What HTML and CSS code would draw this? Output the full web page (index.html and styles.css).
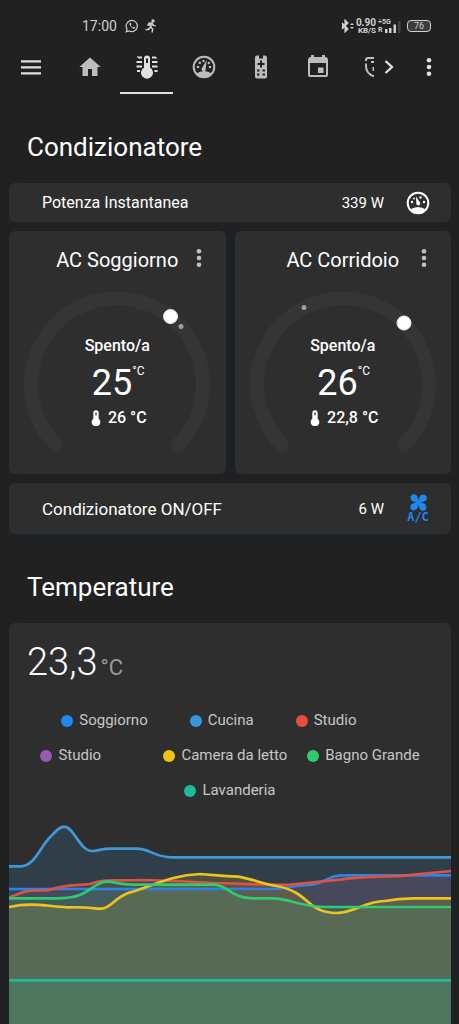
FILE: index.html
```html
<!DOCTYPE html>
<html lang="it">
<head>
<meta charset="utf-8">
<meta name="viewport" content="width=device-width, initial-scale=1">
<title>Condizionatore</title>
<link rel="stylesheet" href="styles.css">
</head>
<body>
<svg class="defs" aria-hidden="true">
  <symbol id="thermo" viewBox="0 0 24 24"><path fill-rule="evenodd" d="M16 13V4.500a4 4 0 0 0-8 0V13a6.500 6.500 0 1 0 8 0ZM12 3.500a1 1 0 0 1 1 1V8h-2V4.500a1 1 0 0 1 1-1Z"/></symbol>
  <symbol id="dots" viewBox="0 0 24 24"><circle cx="12" cy="5.300" r="2.300"/><circle cx="12" cy="12" r="2.300"/><circle cx="12" cy="18.700" r="2.300"/></symbol>
</svg>
<div class="app">
  <div class="status">
    <span class="clock">17:00</span>
    <svg class="s-icon" viewBox="0 0 14 14"><path d="M1.200 12.800 2 10A5.600 5.600 0 1 1 4.200 12Z" fill="none" stroke="currentColor" stroke-width="1.200"/><path d="M4.600 4c-.8 1.500 2.200 5.600 4.400 5.700 1 0 1.500-.8 1.300-1.200L8.800 7.700l-.8.8C7 8.200 6 7 5.800 6.200l.6-.8-.6-1.600Z" fill="currentColor"/></svg>
    <svg class="s-icon" viewBox="0 0 14 14" fill="none" stroke="currentColor" stroke-width="1.300"><circle cx="9" cy="2" r="1" fill="currentColor"/><path d="M3.500 6.500 5 4.200l3-.2 1.700 2.500 2 .3M7.500 4.200 6.300 8l2.500 2-.8 3.500M6.200 8.200 5 10.500l-3.500.3"/></svg>
    <span class="spacer"></span>
    <svg class="bt" viewBox="0 0 13 14" fill="none" stroke="currentColor"><path d="M1 4l6 6-3 3V1l3 3-6 6" stroke-width="1.200"/><path d="M9 6l2-2 2 2ZM9 8l2 2 2-2Z" fill="currentColor" stroke="none"/></svg>
    <span class="rate"><b>0.90</b><b class="unit">KB/S</b></span>
    <span class="net"><b>÷5G</b><b>R</b></span>
    <svg class="signal" viewBox="0 0 17 14" fill="currentColor"><path d="M0 9h2.500v4H0ZM4 8h2.500v5H4ZM8.500 4.500H11V13H8.500Z"/><path opacity=".2" d="M13 1h2.500v12H13Z"/></svg>
    <span class="battery">76</span>
  </div>

  <nav class="toolbar" aria-label="Viste">
    <button class="tool menu" aria-label="Menu"><svg class="icon" viewBox="0 0 24 24"><path d="M2 5.200h20v2.200H2ZM2 11.200h20v2.200H2ZM2 17.200h20v2.200H2Z"/></svg></button>
    <div class="tabs">
      <button class="tab" aria-label="Casa"><svg class="icon" viewBox="0 0 24 24"><path d="M10 21v-7h4v7h5.500v-9h3.200L12 2.500 1.300 12h3.200v9Z"/></svg></button>
      <button class="tab active" aria-label="Clima"><svg class="icon" viewBox="0 0 24 24"><path fill-rule="evenodd" d="M15 12.500V3.500a3 3 0 0 0-6 0v9a6 6 0 1 0 6 0ZM11 3.500h2V8h-2Z"/><path d="M1.500 1.500H7v2H3.500ZM1.500 6H7v2H1.500ZM1.500 10.500H7v2H1.500ZM2 15h3v2H2ZM17 1.500h3.500l2 2H17ZM17 6h5.500v2H17ZM17 10.500h5.500v2H17ZM19.500 15h3v2h-3Z"/></svg></button>
      <button class="tab" aria-label="Consumi"><svg class="icon" viewBox="0 0 24 24"><circle cx="12" cy="12" r="10.300" fill="none" stroke="currentColor" stroke-width="2"/><path d="M4 18.500Q12 13.500 20 18.500L16 22.500H8ZM14.700 5 13.800 13.500a2.200 2.200 0 1 1-3.500-1Z"/><circle cx="6" cy="12" r="1.300"/><circle cx="7.800" cy="7.700" r="1.300"/><circle cx="11.500" cy="6" r="1.200"/><circle cx="16.800" cy="8" r="1.200"/><circle cx="18" cy="12" r="1.300"/></svg></button>
      <button class="tab" aria-label="Telecomando"><svg class="icon" viewBox="0 0 24 24"><path fill-rule="evenodd" d="M8 .5h2v3h4v-3h2a2 2 0 0 1 2 2v19a2 2 0 0 1-2 2H8a2 2 0 0 1-2-2v-19a2 2 0 0 1 2-2ZM11 5.500V8H8.500v2H11v2.500h2V10h2.500V8H13V5.500ZM8 14.500v2h2.500v-2ZM13.500 14.500v2H16v-2ZM8 18.500v2h2.500v-2ZM13.500 18.500v2H16v-2Z"/></svg></button>
      <button class="tab" aria-label="Calendario"><svg class="icon" viewBox="0 0 24 24"><path fill-rule="evenodd" d="M5 0h3v2h8V0h3v2a3 3 0 0 1 3 3v15a2 2 0 0 1-2 2H4a2 2 0 0 1-2-2V5a3 3 0 0 1 3-3ZM4 8v12h16V8ZM12 12.500h5.500V18H12Z"/></svg></button>
      <button class="tab cut" aria-label="Sicurezza"><svg class="icon" viewBox="0 0 24 24"><path d="M3 6V5a2 2 0 0 1 2-2H12M3 8.500V11C3 16 6 20 12 21.500" fill="none" stroke="currentColor" stroke-width="2"/><path d="M8 6h4v2H8ZM9.500 12H12v4H9.500Z"/></svg></button>
    </div>
    <button class="tool next" aria-label="Avanti"><svg class="icon" viewBox="0 0 24 24"><path d="m8.500 6 6.500 6-6.500 6" fill="none" stroke="currentColor" stroke-width="2.300"/></svg></button>
    <button class="tool more" aria-label="Altro"><svg class="icon"><use href="#dots"/></svg></button>
  </nav>

  <main class="view">
    <h1 class="title">Condizionatore</h1>
    <section class="card row">
      <span class="name small">Potenza Instantanea</span><span class="value">339 W</span>
      <svg class="icon" viewBox="0 0 24 24"><circle cx="12" cy="12" r="10.300" fill="none" stroke="currentColor" stroke-width="2"/><path d="M4 18.500Q12 13.500 20 18.500L16 22.500H8ZM10 5.500l3.800 5.700a2 2 0 1 1-3.500 1.200Z"/><circle cx="6" cy="11" r="1.200"/><circle cx="8" cy="7.500" r="1"/><circle cx="14.500" cy="6.500" r="1.200"/><circle cx="18" cy="11" r="1.200"/></svg>
    </section>

    <div class="pair">
      <section class="card climate">
        <header class="head"><h2 class="label">AC Soggiorno</h2><button class="opt" aria-label="Opzioni AC Soggiorno"><svg class="icon"><use href="#dots"/></svg></button></header>
        <div class="dial">
          <svg class="arc" viewBox="-100 -100 200 174"><path class="track" d="M-61 61A86 86 0 1 1 61 61"/><circle class="now" cx="64" cy="-57.500" r="2.500"/><circle class="thumb" cx="53.500" cy="-67.500" r="7"/></svg>
          <div class="reading">
            <span class="state">Spento/a</span>
            <span class="target">25<sup class="deg">°C</sup></span>
            <span class="current"><svg class="mini"><use href="#thermo"/></svg>26 °C</span>
          </div>
        </div>
      </section>
      <section class="card climate">
        <header class="head"><h2 class="label">AC Corridoio</h2><button class="opt" aria-label="Opzioni AC Corridoio"><svg class="icon"><use href="#dots"/></svg></button></header>
        <div class="dial">
          <svg class="arc" viewBox="-100 -100 200 174"><path class="track" d="M-61 61A86 86 0 1 1 61 61"/><circle class="now" cx="-39" cy="-76.500" r="2.500"/><circle class="thumb" cx="61" cy="-61" r="7"/></svg>
          <div class="reading">
            <span class="state">Spento/a</span>
            <span class="target">26<sup class="deg">°C</sup></span>
            <span class="current"><svg class="mini"><use href="#thermo"/></svg>22,8 °C</span>
          </div>
        </div>
      </section>
    </div>

    <section class="card row tall">
      <span class="name">Condizionatore ON/OFF</span><span class="value">6 W</span>
      <span class="ac"><svg class="fan" viewBox="-8 -8 16 16"><path id="blade" d="M0 1C-1-1-2-1-4-.500-8-1-9-7.500-4.500-7.800-.5-8-1.500-4 1-2Z"/><use href="#blade" transform="rotate(90)"/><use href="#blade" transform="rotate(180)"/><use href="#blade" transform="rotate(270)"/><circle r="2"/></svg><b class="ac-text">A/C</b></span>
    </section>

    <h1 class="title second">Temperature</h1>
    <section class="card graph">
      <p class="big">23,3<span class="unit-c">°C</span></p>
      <div class="legend">
        <div class="keys wide"><span class="key soggiorno">Soggiorno</span><span class="key cucina">Cucina</span><span class="key studio">Studio</span></div>
        <div class="keys"><span class="key studio second-studio">Studio</span><span class="key letto">Camera da letto</span><span class="key bagno">Bagno Grande</span></div>
        <div class="keys"><span class="key lavanderia">Lavanderia</span></div>
      </div>
      <svg class="chart" viewBox="27 36 1326 606" preserveAspectRatio="none" role="img" aria-label="Andamento delle temperature">
        <defs>
          <path id="l-cucina" d="M27 169H60C105 169 120 110 150 82 170 60 180 50 192 50 222 50 240 123 275 123 295 123 300 116 335 116H410C450 116 465 142 515 142H1353"/>
          <path id="l-sogg" d="M27 237H820C860 237 870 225 940 223 985 215 980 196 1035 196H1353"/>
          <path id="l-studio" d="M27 263C90 236 90 243 145 241 190 225 220 227 270 222 310 205 350 214 425 210 510 211 570 214 640 219 720 220 780 226 870 224 940 218 980 212 1020 209 1080 198 1150 202 1220 196L1353 183"/>
          <path id="l-letto" d="M27 291C90 277 130 287 200 292 280 290 270 296 305 296 335 296 345 255 405 243 470 222 520 195 600 192 640 194 660 199 715 200 760 208 790 222 830 228 930 246 920 309 1010 309 1060 309 1100 272 1155 273 1190 266 1210 265 1240 265H1353"/>
          <path id="l-bagno" d="M27 265H170C275 265 275 215 320 215 350 215 350 224 400 224H640C685 224 690 265 760 265H820C870 265 900 291 980 291H1353"/>
          <path id="l-lav" d="M27 511H1353"/>
        </defs>
        <g class="areas">
          <path class="f-cucina" d="M27 169H60C105 169 120 110 150 82 170 60 180 50 192 50 222 50 240 123 275 123 295 123 300 116 335 116H410C450 116 465 142 515 142H1353V642H27Z"/>
          <path class="f-sogg" d="M27 237H820C860 237 870 225 940 223 985 215 980 196 1035 196H1353V642H27Z"/>
          <path class="f-studio" d="M27 263C90 236 90 243 145 241 190 225 220 227 270 222 310 205 350 214 425 210 510 211 570 214 640 219 720 220 780 226 870 224 940 218 980 212 1020 209 1080 198 1150 202 1220 196L1353 183V642H27Z"/>
          <path class="f-letto" d="M27 291C90 277 130 287 200 292 280 290 270 296 305 296 335 296 345 255 405 243 470 222 520 195 600 192 640 194 660 199 715 200 760 208 790 222 830 228 930 246 920 309 1010 309 1060 309 1100 272 1155 273 1190 266 1210 265 1240 265H1353V642H27Z"/>
          <path class="f-bagno" d="M27 265H170C275 265 275 215 320 215 350 215 350 224 400 224H640C685 224 690 265 760 265H820C870 265 900 291 980 291H1353V642H27Z"/>
          <path class="f-lav" d="M27 511H1353V642H27Z"/>
        </g>
        <g class="lines">
          <use class="s-cucina" href="#l-cucina"/><use class="s-sogg" href="#l-sogg"/><use class="s-studio" href="#l-studio"/><use class="s-letto" href="#l-letto"/><use class="s-bagno" href="#l-bagno"/><use class="s-lav" href="#l-lav"/>
        </g>
      </svg>
    </section>
  </main>
</div>
</body>
</html>
```
FILE: styles.css
```css
* { box-sizing: border-box; }
body {
  margin: 0;
  background: #212121;
  color: #fff;
  font-family: Roboto, "Liberation Sans", sans-serif;
  font-size: 16px;
}
h1, h2, p { margin: 0; font-weight: 400; }
button {
  display: grid;
  place-items: center;
  padding: 0;
  border: 0;
  background: none;
  color: inherit;
}
svg { display: block; fill: currentColor; }
.defs { display: none; }
.icon { width: 24px; height: 24px; }
.app {
  display: flex;
  flex-direction: column;
  min-height: 100vh;
}

/* phone status bar */
.status {
  display: flex;
  align-items: center;
  height: 40px;
  padding: 12px 28px 0 82px;
  color: #d0d0d0;
}
.clock { margin-right: 8px; font-size: 14px; }
.s-icon { width: 14px; height: 14px; margin-right: 5px; }
.spacer { flex: 1; }
.bt { width: 13px; height: 14px; margin-right: 2px; }
.rate, .net {
  display: flex;
  flex-direction: column;
  align-items: flex-end;
  line-height: 8px;
}
.rate { font-size: 10px; }
.unit { font-size: 8px; line-height: 7px; }
.net { align-items: flex-start; width: 16px; margin-left: 2px; font-size: 7px; }
.signal { align-self: flex-end; width: 17px; height: 14px; margin: 0 5px 6px -9px; }
.battery {
  width: 24px;
  border: 1px solid #d0d0d0;
  border-radius: 4px;
  background: #3c3c3c;
  font-size: 9px;
  line-height: 10px;
  text-align: center;
}

/* view switcher */
.toolbar {
  display: flex;
  height: 54px;
  padding: 0 15px 0 16px;
  color: #e1e1e1;
}
.tool { flex: none; width: 30px; }
.more { margin-left: 10px; }
.tabs {
  display: flex;
  flex: 1;
  gap: 4px;
  margin-left: 17px;
  overflow: hidden;
}
.tab {
  flex: none;
  width: 53px;
  padding-top: 2px;
  border-bottom: 2px solid transparent;
  color: #bdbdbd;
}
.tab.active { border-color: #e1e1e1; color: #e1e1e1; }
.tab.cut { width: 27px; justify-content: start; padding-left: 15px; overflow: hidden; }

/* cards */
.view {
  display: flex;
  flex: 1;
  flex-direction: column;
  padding: 0 8px 0 9px;
}
.title {
  padding: 35px 18px 18px;
  font-size: 26px;
  line-height: 36px;
}
.card {
  border-radius: 6px;
  background: #2e2e2e;
  box-shadow: 0 2px 9px #1c252c;
}
.row {
  display: flex;
  align-items: center;
  height: 39px;
  padding: 0 21px 0 33px;
}
.row.tall { height: 51px; }
.name { flex: 1; font-size: 17px; }
.small { font-size: 16px; }
.value { margin-right: 22px; font-size: 15px; }
.ac {
  display: flex;
  flex-direction: column;
  align-items: center;
  width: 24px;
  color: #1e88f0;
}
.fan { width: 17px; height: 17px; }
.ac-text { font: bold 12px/12px "DejaVu Sans Mono", monospace; }

.pair {
  display: grid;
  grid-template-columns: 1fr 1fr;
  gap: 9px;
  margin: 9px 0;
}
.climate { height: 243px; }
.head { position: relative; height: 53px; }
.label {
  padding-top: 17px;
  font-size: 20px;
  line-height: 24px;
  text-align: center;
}
.opt { position: absolute; top: 15px; right: 15px; color: #bdc1cc; }
.dial { display: grid; justify-items: center; }
.arc, .reading { grid-area: 1 / 1; }
.arc { width: 200px; height: 174px; }
.track { fill: none; stroke: #353535; stroke-width: 14; stroke-linecap: round; }
.now { fill: #9e9e9e; }
.thumb { fill: #fff; stroke: #ebebeb; }
.reading {
  display: flex;
  flex-direction: column;
  align-items: center;
  padding-top: 52px;
}
.state { font-size: 16px; font-weight: 500; line-height: 20px; }
.target { display: flex; padding-left: 2px; font-size: 36px; line-height: 54px; }
.deg { font-size: 12px; line-height: 30px; }
.current {
  display: flex;
  align-items: center;
  gap: 4px;
  font-size: 16px;
  font-weight: 500;
  line-height: 16px;
}
.mini { width: 16px; height: 16px; }

/* temperature graph */
.graph {
  display: flex;
  flex: 1;
  flex-direction: column;
  border-radius: 6px 6px 0 0;
}
.big {
  padding: 16px 18px 0;
  font-size: 38px;
  font-weight: 300;
  line-height: 46px;
}
.unit-c { margin-left: 3px; color: #9b9b9b; font-size: 22px; font-weight: 400; }
.legend { padding-top: 12px; color: #c6c6c6; font-size: 15px; }
.keys {
  display: flex;
  justify-content: center;
  gap: 20px;
  line-height: 35px;
}
.keys.wide { gap: 42px; }
.key { display: flex; align-items: center; gap: 6px; }
.key::before { content: ""; width: 12px; height: 12px; border-radius: 50%; background: #e74c3c; }
.key.studio { min-width: 103px; }
.key.soggiorno::before { background: #1e88f5; }
.key.cucina::before { background: #3498db; }
.key.second-studio::before { background: #9b59b6; }
.key.letto::before { background: #f1c40f; }
.key.bagno::before { background: #2ecc71; }
.key.lavanderia::before { background: #1abc9c; }
.chart { flex: 1 1 0; width: 100%; min-height: 202px; margin-top: 14px; }
.areas { fill-opacity: .15; }
.lines { fill: none; stroke-width: 8; }
.f-cucina { fill: #3498db; }
.f-sogg { fill: #1e88f5; }
.f-studio { fill: #e74c3c; }
.f-letto { fill: #f1c40f; }
.f-bagno { fill: #2ecc71; }
.f-lav { fill: #1abc9c; }
.s-cucina { stroke: #3f98d8; }
.s-sogg { stroke: #2a86e5; }
.s-studio { stroke: #dc5245; }
.s-letto { stroke: #edc41c; }
.s-bagno { stroke: #2ecc71; }
.s-lav { stroke: #22b999; }
```
